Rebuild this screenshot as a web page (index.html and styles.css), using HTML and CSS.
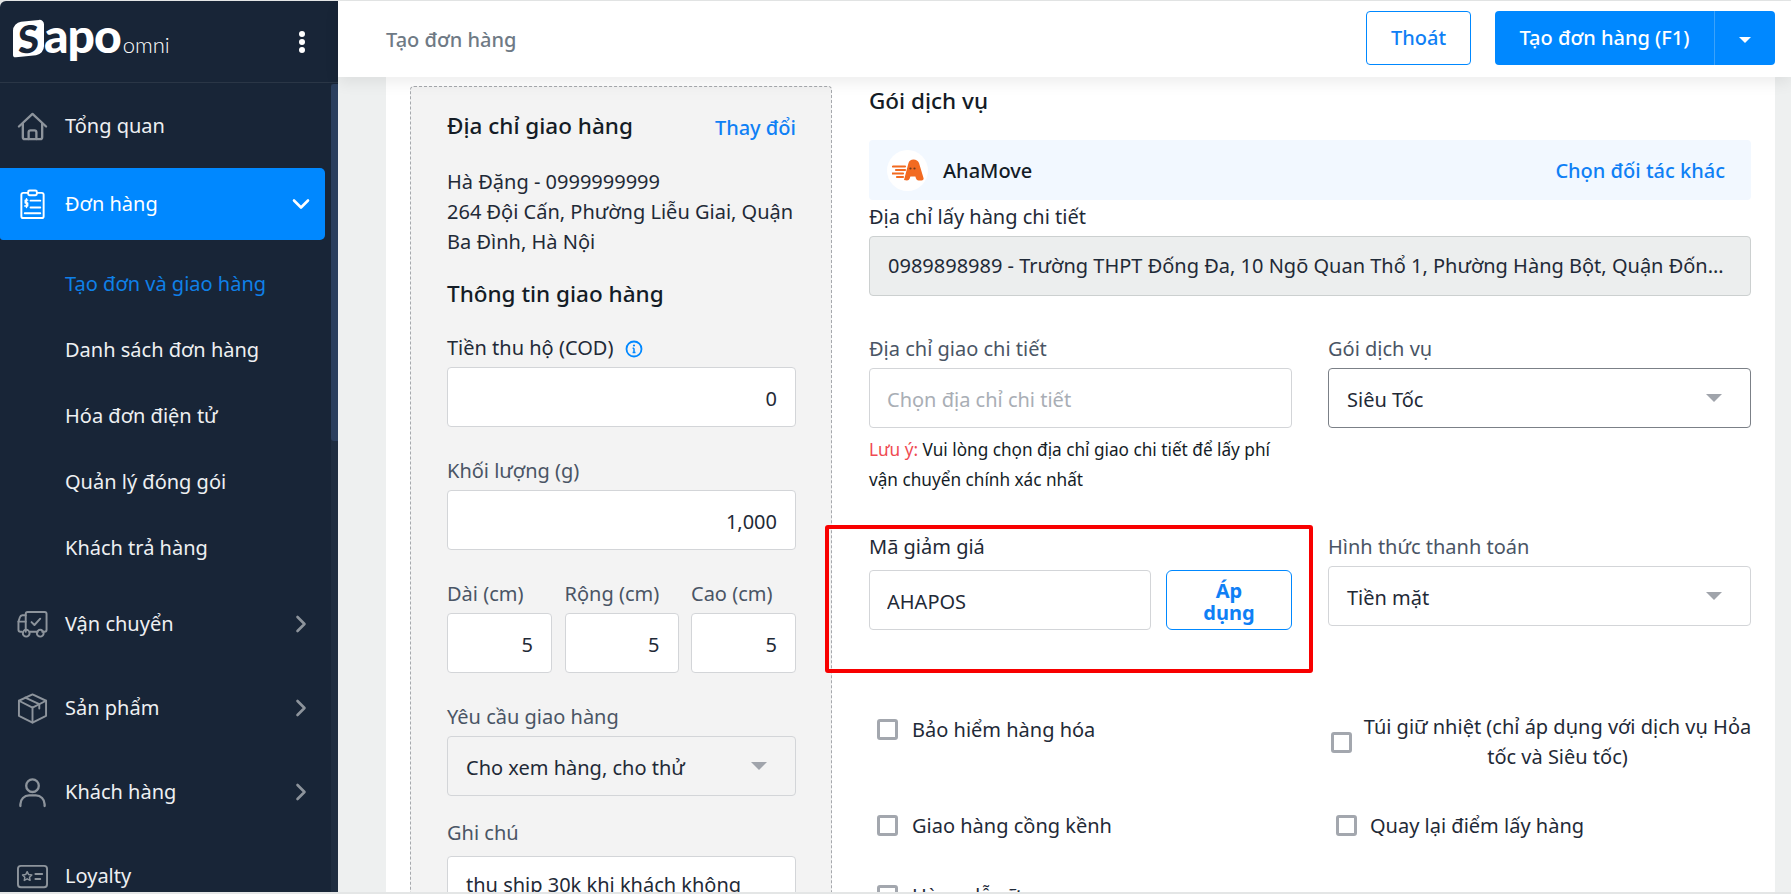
FILE: index.html
```html
<!DOCTYPE html>
<html lang="vi">
<head>
  <meta charset="UTF-8">
  <meta name="viewport" content="width=device-width, initial-scale=1.0">
  <title>Tạo đơn hàng</title>
  <link rel="stylesheet" href="styles.css">
</head>
<body>
  <aside class="sidebar">
    <div class="brand">
      <div class="logo">
        <span class="logo-s">S</span><span class="logo-apo">apo</span><span class="logo-omni">omni</span>
      </div>
      <svg class="kebab" width="8" height="24" viewBox="0 0 8 24"><circle cx="4" cy="4" r="3" fill="#fff"/><circle cx="4" cy="12" r="3" fill="#fff"/><circle cx="4" cy="20" r="3" fill="#fff"/></svg>
    </div>
    <div class="scroll-thumb"></div>
    <nav class="nav">
      <a class="nav-item">
        <svg class="nav-icon" viewBox="0 0 32 32" fill="none" stroke="#8d949c" stroke-width="2.4" stroke-linejoin="round" stroke-linecap="round"><path d="M2 16 16 3l14 13"/><path d="M6 13v14a2 2 0 0 0 2 2h16a2 2 0 0 0 2-2V13"/><path d="M12 29v-7a2 2 0 0 1 2-2h4a2 2 0 0 1 2 2v7"/></svg>
        <span>Tổng quan</span>
      </a>
      <a class="nav-item nav-active">
        <svg class="nav-icon" viewBox="0 0 32 32" fill="none" stroke="#fff" stroke-width="2" stroke-linejoin="round" stroke-linecap="round"><rect x="4.500" y="4" width="23" height="26" rx="2"/><rect x="11.500" y="1.500" width="9" height="5" rx="1.500" fill="#0088ff"/><path d="M14 12h10M14 19h10M8 25h16M8 25h1"/><path d="M11 11.500H8.500v3H11v3H8M9.800 10v9" stroke-width="1.500"/></svg>
        <span>Đơn hàng</span>
        <svg class="chev chev-down" width="18" height="12" viewBox="0 0 18 12" fill="none" stroke="#fff" stroke-width="2.600" stroke-linecap="round" stroke-linejoin="round"><path d="M2 2.500 9 9.500l7-7"/></svg>
      </a>
      <div class="subnav">
        <a class="sub-item sub-active">Tạo đơn và giao hàng</a>
        <a class="sub-item">Danh sách đơn hàng</a>
        <a class="sub-item">Hóa đơn điện tử</a>
        <a class="sub-item">Quản lý đóng gói</a>
        <a class="sub-item">Khách trả hàng</a>
      </div>
      <a class="nav-item">
        <svg class="nav-icon" viewBox="0 0 32 32" fill="none" stroke="#8d949c" stroke-width="2" stroke-linejoin="round" stroke-linecap="round"><path d="M9 6.500h-3.500A3 3 0 0 0 3 8.500L1.500 13v8.500a2 2 0 0 0 2 2H5"/><path d="M1.500 13H9"/><path d="M9 23.500V5a2 2 0 0 1 2-2h17.500a2 2 0 0 1 2 2v16.500a2 2 0 0 1-2 2H26"/><path d="M13.500 23.500h8"/><circle cx="9.500" cy="25" r="3.500"/><circle cx="24" cy="25" r="3.500"/><path d="m15 13.500 3 3 6-6.500"/></svg>
        <span>Vận chuyển</span>
        <svg class="chev" width="12" height="18" viewBox="0 0 12 18" fill="none" stroke="#8d949c" stroke-width="2.600" stroke-linecap="round" stroke-linejoin="round"><path d="M2.500 2l7 7-7 7"/></svg>
      </a>
      <a class="nav-item">
        <svg class="nav-icon" viewBox="0 0 32 32" fill="none" stroke="#8d949c" stroke-width="2" stroke-linejoin="round" stroke-linecap="round"><path d="M16 1.500 30 8v15.500L16 30.500 2 23.500V8z"/><path d="M2 8l14 7 14-7M16 15v15.500"/><path d="M8.500 4.700 23 11.500v4.500"/></svg>
        <span>Sản phẩm</span>
        <svg class="chev" width="12" height="18" viewBox="0 0 12 18" fill="none" stroke="#8d949c" stroke-width="2.600" stroke-linecap="round" stroke-linejoin="round"><path d="M2.500 2l7 7-7 7"/></svg>
      </a>
      <a class="nav-item">
        <svg class="nav-icon" viewBox="0 0 32 32" fill="none" stroke="#8d949c" stroke-width="2.400" stroke-linecap="round"><circle cx="16" cy="9" r="6.500"/><path d="M3.500 30v-2a9 9 0 0 1 9-9h7a9 9 0 0 1 9 9v2"/></svg>
        <span>Khách hàng</span>
        <svg class="chev" width="12" height="18" viewBox="0 0 12 18" fill="none" stroke="#8d949c" stroke-width="2.600" stroke-linecap="round" stroke-linejoin="round"><path d="M2.500 2l7 7-7 7"/></svg>
      </a>
      <a class="nav-item">
        <svg class="nav-icon" viewBox="0 0 32 32" fill="none" stroke="#8d949c" stroke-width="2" stroke-linejoin="round" stroke-linecap="round"><rect x="1" y="5" width="30" height="22" rx="3"/><path d="m10.500 11 1.500 3 3.300.4-2.400 2.300.6 3.300-3-1.600-3 1.600.6-3.300-2.400-2.300 3.300-.4z" stroke-width="1.500"/><path d="M19 13.500h7M19 18.500h5"/></svg>
        <span>Loyalty</span>
      </a>
    </nav>
  </aside>

  <main class="main">
    <header class="topbar">
      <div class="page-title">Tạo đơn hàng</div>
      <div class="top-actions">
        <button class="btn-outline">Thoát</button>
        <div class="btn-split">
          <button class="btn-primary">Tạo đơn hàng (F1)</button>
          <button class="btn-caret"><span class="caret-white"></span></button>
        </div>
      </div>
    </header>

    <div class="content">
      <div class="card">
        <section class="panel">
          <div class="panel-head">
            <h3>Địa chỉ giao hàng</h3>
            <a class="link">Thay đổi</a>
          </div>
          <p class="address">Hà Đặng - 0999999999<br>264 Đội Cấn, Phường Liễu Giai, Quận Ba Đình, Hà Nội</p>
          <h3 class="panel-title">Thông tin giao hàng</h3>

          <div class="field">
            <label class="label label-dark">Tiền thu hộ (COD)
              <svg class="info" width="18" height="18" viewBox="0 0 18 18" fill="none"><circle cx="9" cy="9" r="7.500" stroke="#0088ff" stroke-width="1.800"/><path d="M9 8.200v4.300M7.600 8.200H9M7.600 12.600h2.900" stroke="#0088ff" stroke-width="1.500"/><circle cx="9" cy="5.500" r="1.100" fill="#0088ff"/></svg>
            </label>
            <input class="input num" value="0">
          </div>
          <div class="field">
            <label class="label">Khối lượng (g)</label>
            <input class="input num" value="1,000">
          </div>
          <div class="dims field">
            <div><label class="label">Dài (cm)</label><input class="input num" value="5"></div>
            <div><label class="label">Rộng (cm)</label><input class="input num" value="5"></div>
            <div><label class="label">Cao (cm)</label><input class="input num" value="5"></div>
          </div>
          <div class="field field-short">
            <label class="label">Yêu cầu giao hàng</label>
            <div class="select select-muted"><span>Cho xem hàng, cho thử</span><i class="caret"></i></div>
          </div>
          <div class="field">
            <label class="label label-note">Ghi chú</label>
            <textarea class="input note" rows="3">thu ship 30k khi khách không nhận hàng</textarea>
          </div>
        </section>

        <section class="service">
          <h3 class="service-title">Gói dịch vụ</h3>
          <div class="partner">
            <span class="partner-logo">
              <svg width="32" height="24" viewBox="0 0 32 24"><path d="M12 22 16.500 5q1-3.500 5-3.500T27 5l4.500 15q.6 2.500-2 2.500h-3q-1.800 0-2.500-2l-.6-2h-5l-.8 2.300Q17 22.500 15 22.500z" fill="#f26a21"/><path d="M1 8.500h12M4 12h9M0 15.500h11M5 19h6" stroke="#f26a21" stroke-width="2.200" stroke-linecap="round"/><circle cx="18.500" cy="10.500" r="1.100" fill="#6b3a1e"/><circle cx="22.500" cy="10.500" r="1.100" fill="#6b3a1e"/></svg>
            </span>
            <span class="partner-name">AhaMove</span>
            <a class="link partner-link">Chọn đối tác khác</a>
          </div>
          <label class="label label-dark label-pickup">Địa chỉ lấy hàng chi tiết</label>
          <div class="readonly">0989898989 - Trường THPT Đống Đa, 10 Ngõ Quan Thổ 1, Phường Hàng Bột, Quận Đống Đa, Hà Nội</div>

          <div class="form-grid">
            <div>
              <label class="label label-ship">Địa chỉ giao chi tiết</label>
              <input class="input input-left" placeholder="Chọn địa chỉ chi tiết">
              <p class="hint"><span class="hint-red">Lưu ý:</span> Vui lòng chọn địa chỉ giao chi tiết để lấy phí vận chuyển chính xác nhất</p>
            </div>
            <div>
              <label class="label label-ship">Gói dịch vụ</label>
              <div class="select select-focus"><span>Siêu Tốc</span><i class="caret"></i></div>
            </div>
            <div class="coupon">
              <label class="label label-dark label-coupon">Mã giảm giá</label>
              <div class="coupon-row">
                <input class="input input-left" value="AHAPOS">
                <button class="btn-apply">Áp dụng</button>
              </div>
              <div class="highlight"></div>
            </div>
            <div>
              <label class="label">Hình thức thanh toán</label>
              <div class="select"><span>Tiền mặt</span><i class="caret"></i></div>
            </div>
          </div>

          <div class="checks">
            <label class="check check-a"><i class="box"></i>Bảo hiểm hàng hóa</label>
            <label class="check check-b"><i class="box"></i><span class="check-wrap">Túi giữ nhiệt (chỉ áp dụng với dịch vụ Hỏa<br>tốc và Siêu tốc)</span></label>
            <label class="check check-a"><i class="box"></i>Giao hàng cồng kềnh</label>
            <label class="check check-c"><i class="box"></i>Quay lại điểm lấy hàng</label>
            <label class="check check-a"><i class="box"></i>Hàng dễ vỡ</label>
          </div>
        </section>
      </div>
    </div>
  </main>
</body>
</html>
```

FILE: styles.css
```css
* {
  margin: 0;
  padding: 0;
  box-sizing: border-box;
}
html, body {
  height: 894px;
  overflow: hidden;
}
body {
  font-family: 'Noto Sans', 'Open Sans', sans-serif;
  font-size: 20px;
  color: #1f2a37;
  background-color: #e4e6e6;
  display: flex;
  padding: 1px 0 2px;
}
h3 {
  font-size: 22.5px;
  font-weight: 500;
  line-height: 26px;
  padding-bottom: 2px;
  color: #141c26;
}
.link {
  color: #0f80f5;
  font-weight: 500;
}

/* sidebar */
.sidebar {
  width: 338px;
  flex: none;
  background: #182537;
  position: relative;
  overflow: hidden;
  border-top-left-radius: 6px;
}
.sidebar::after {
  content: "";
  position: absolute;
  top: 83px;
  right: 0;
  bottom: 0;
  width: 7px;
  background: #1f2d40;
}
.scroll-thumb {
  position: absolute;
  top: 83px;
  right: 0;
  width: 7px;
  height: 357px;
  background: #2b3f5e;
  border-radius: 3px 0 0 3px;
  z-index: 1;
}
.brand {
  height: 82px;
  border-bottom: 1px solid #2a3646;
  display: flex;
  align-items: center;
  justify-content: space-between;
  padding: 0 32px 0 13px;
}
.logo {
  display: flex;
  align-items: baseline;
  color: #fff;
  margin-top: -10px;
}
.logo-s {
  background: #fff;
  color: #182537;
  font-family: 'Lato', sans-serif;
  font-weight: 900;
  font-size: 38px;
  line-height: 35px;
  width: 31px;
  text-align: center;
  border-radius: 8px 5px 8px 3px;
  transform: skewY(-6deg);
}
.logo-apo {
  font-family: 'Lato', sans-serif;
  font-weight: 900;
  font-size: 48px;
  line-height: 40px;
  letter-spacing: -1px;
}
.logo-omni {
  font-family: 'Lato', sans-serif;
  font-weight: 300;
  font-size: 22px;
  margin-left: 2px;
}
.nav {
  padding-top: 1px;
}
.nav-item {
  height: 84px;
  display: flex;
  align-items: center;
  color: #eef0f2;
  padding-left: 17px;
  width: 325px;
  position: relative;
}
.nav-item span {
  margin-top: -2px;
}
.nav-item .chev {
  position: absolute;
  right: 18px;
}
.nav-item .chev-down {
  right: 15px;
}
.nav-icon {
  width: 31px;
  height: 31px;
  margin-right: 17px;
  flex: none;
}
.nav-active {
  height: 72px;
  margin: 0 0 11px;
  background: #0088ff;
  color: #fff;
  border-radius: 0 5px 5px 3px;
}
.subnav {
  padding-bottom: 1px;
}
.sub-item {
  display: flex;
  align-items: center;
  height: 66px;
  padding: 0 0 2px 65px;
  color: #eef0f2;
}
.sub-active {
  color: #0f80e8;
}

/* top bar */
.main {
  flex: 1;
  min-width: 0;
  display: flex;
  flex-direction: column;
}
.topbar {
  height: 76px;
  flex: none;
  background: #fff;
  display: flex;
  align-items: center;
  justify-content: space-between;
  padding: 0 16px 0 48px;
  box-shadow: 0 6px 14px rgba(0, 0, 0, 0.07);
  position: relative;
  z-index: 2;
}
.page-title {
  color: #6f7a85;
  font-weight: 500;
  margin-top: 1px;
}
.top-actions {
  display: flex;
  gap: 24px;
  margin-top: -3px;
}
.top-actions button {
  font-family: inherit;
  font-size: 20px;
  font-weight: 500;
  height: 54px;
  cursor: pointer;
}
.btn-outline {
  width: 105px;
  background: #fff;
  color: #0f80f5;
  border: 1px solid #0088ff;
  border-radius: 4px;
}
.btn-split {
  display: flex;
  width: 280px;
}
.btn-primary {
  width: 220px;
  background: #0088ff;
  color: #fff;
  border: none;
  border-right: 1px solid #3aa2fb;
  border-radius: 4px 0 0 4px;
}
.btn-caret {
  flex: 1;
  background: #0088ff;
  border: none;
  border-radius: 0 4px 4px 0;
}
.caret-white {
  display: inline-block;
  border: 6px solid transparent;
  border-top: 6px solid #fff;
  border-bottom: none;
  vertical-align: middle;
}

/* content */
.content {
  flex: 1;
  min-height: 0;
  background: #eef0f0;
  padding: 0 16px 0 48px;
  overflow: hidden;
}
.card {
  background: #fff;
  height: 100%;
  display: flex;
  padding: 9px 24px 0;
}
.panel {
  width: 422px;
  flex: none;
  height: 1100px;
  background: #f3f3f3;
  border: 1px dashed #a6a9ad;
  border-radius: 4px;
  padding: 26px 35px 0 36px;
}
.panel-head {
  display: flex;
  justify-content: space-between;
  align-items: center;
}
.address {
  line-height: 30px;
  margin-top: 26px;
}
.panel-title {
  margin-top: 24px;
  margin-bottom: 27px;
}
.label {
  display: block;
  height: 24px;
  line-height: 24px;
  margin-bottom: 7px;
  color: #4a5565;
  white-space: nowrap;
}
.label-dark {
  color: #1f2a37;
}
.info {
  vertical-align: -3px;
  margin-left: 6px;
}
.field {
  margin-bottom: 32px;
}
.field-short {
  margin-bottom: 25px;
}
.label-note {
  margin-bottom: 11px;
}
.input {
  display: block;
  width: 100%;
  height: 60px;
  font-family: inherit;
  font-size: 20px;
  color: #1f2a37;
  background: #fff;
  border: 1px solid #d3d5d8;
  border-radius: 4px;
  padding: 2px 18px 0;
  outline: none;
}
.input::placeholder {
  color: #a9aeb5;
}
.num {
  text-align: right;
}
.note {
  height: 110px;
  padding-top: 14px;
  line-height: 28px;
  resize: none;
}
.dims {
  display: grid;
  grid-template-columns: 105px 114px 105px;
  gap: 12.500px;
}
.select {
  height: 60px;
  background: #fff;
  border: 1px solid #d3d5d8;
  border-radius: 4px;
  display: flex;
  align-items: center;
  justify-content: space-between;
  padding: 2px 28px 0 18px;
}
.select-muted {
  background: #f3f3f3;
}
.select-focus {
  border-color: #7b8087;
}
.caret {
  border: 8px solid transparent;
  border-top: 8px solid #a0a4ab;
  border-bottom: none;
  margin-top: -2px;
}

/* right column */
.service {
  flex: 1;
  min-width: 0;
  margin-left: 37px;
  padding-top: 2px;
}
.partner {
  margin-top: 24px;
  height: 60px;
  background: #f2f8ff;
  border-radius: 4px;
  display: flex;
  align-items: center;
  padding: 0 26px 0 18px;
}
.partner-logo {
  width: 41px;
  height: 41px;
  background: #fff;
  border-radius: 50%;
  display: flex;
  align-items: center;
  justify-content: center;
}
.partner-name {
  margin-left: 15px;
  font-weight: 500;
  color: #141c26;
}
.partner-link {
  margin-left: auto;
}
.label-pickup {
  margin-top: 5px;
  margin-bottom: 7px;
}
.readonly {
  height: 60px;
  line-height: 58px;
  background: #eceeee;
  border: 1px solid #ccd0d0;
  border-radius: 4px;
  padding: 0 18px;
  white-space: nowrap;
  overflow: hidden;
  text-overflow: ellipsis;
}
.form-grid {
  display: grid;
  grid-template-columns: 423px 423px;
  column-gap: 36px;
  row-gap: 40px;
  margin-top: 40px;
}
.label-ship {
  padding-top: 1px;
  margin-bottom: 8px;
}
.input-left {
  padding: 2px 17px 0;
}
.hint {
  font-size: 17.2px;
  line-height: 30px;
  margin-top: 7px;
  color: #141c26;
}
.hint-red {
  color: #ef4a52;
}
.coupon {
  position: relative;
}
.label-coupon {
  margin-bottom: 11px;
}
.coupon-row {
  display: flex;
  gap: 15px;
}
.coupon-row .input {
  width: 282px;
}
.btn-apply {
  width: 126px;
  height: 60px;
  background: #fff;
  color: #0f80f5;
  border: 1px solid #0088ff;
  border-radius: 6px;
  font-family: inherit;
  font-size: 20px;
  font-weight: 700;
  line-height: 22px;
  padding: 3px 30px 0;
}
.highlight {
  position: absolute;
  left: -44px;
  top: -10px;
  width: 488px;
  height: 148px;
  border: 4px solid #f80000;
  border-radius: 3px;
}
.checks {
  display: grid;
  grid-template-columns: 423px 423px;
  column-gap: 36px;
  margin-top: 82px;
  grid-template-rows: 60px 34px 34px;
  row-gap: 36px;
}
.check {
  display: flex;
  align-items: center;
  color: #1f2a37;
  white-space: nowrap;
}
.box {
  width: 21px;
  height: 21px;
  flex: none;
  border: 3px solid #a3a7ae;
  border-radius: 3px;
  background: #fff;
}
.check-a {
  height: 34px;
  padding-left: 8px;
  gap: 14px;
}
.check-b {
  padding-left: 3px;
  gap: 10px;
  margin-right: -2px;
}
.check-wrap {
  flex: 1;
  text-align: center;
  line-height: 30px;
}
.check-c {
  height: 34px;
  padding-left: 8px;
  gap: 13px;
}
```
